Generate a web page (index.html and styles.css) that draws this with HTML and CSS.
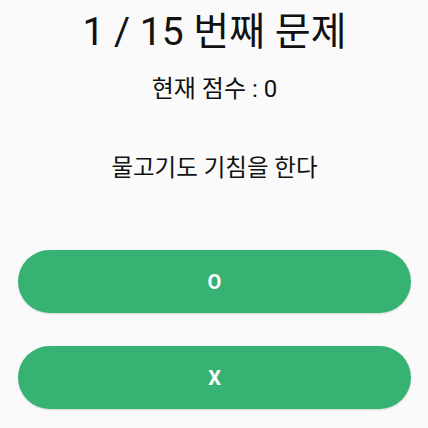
FILE: index.html
```html
<!DOCTYPE html>
<html lang="ko">
<head>
<meta charset="utf-8">
<link rel="stylesheet" href="styles.css">
</head>
<body>
<main class="quiz">
  <h1 class="title">1 / 15 번째 문제</h1>
  <p class="score">현재 점수 : 0</p>
  <p class="question">물고기도 기침을 한다</p>
  <div class="answers">
    <button class="answer">O</button>
    <button class="answer">X</button>
  </div>
</main>
</body>
</html>
```

FILE: styles.css
```css
html, body {
  margin: 0;
  padding: 0;
  background: #fafafa;
}
body {
  width: 428px;
  height: 428px;
  overflow: hidden;
  font-family: Roboto, "Noto Sans CJK KR", sans-serif;
  color: #111;
}
.quiz {
  display: flex;
  flex-direction: column;
  align-items: center;
  padding: 8px 17px 0 18px;
}
.title {
  margin: 0;
  font-size: 39px;
  font-weight: 400;
  line-height: 48px;
}
.score {
  margin: 18px 0 0;
  font-size: 24px;
  line-height: 30px;
}
.question {
  margin: 49px 0 0;
  font-size: 23.5px;
  line-height: 30px;
}
.answers {
  align-self: stretch;
  display: flex;
  flex-direction: column;
  gap: 33px;
  margin-top: 67px;
}
.answer {
  height: 63px;
  border: none;
  border-radius: 32px;
  background: #36b272;
  color: #fff;
  font-family: Roboto, sans-serif;
  font-weight: 700;
  font-size: 20px;
  box-shadow: 0 1px 2px rgba(0,0,0,0.15);
}
```
